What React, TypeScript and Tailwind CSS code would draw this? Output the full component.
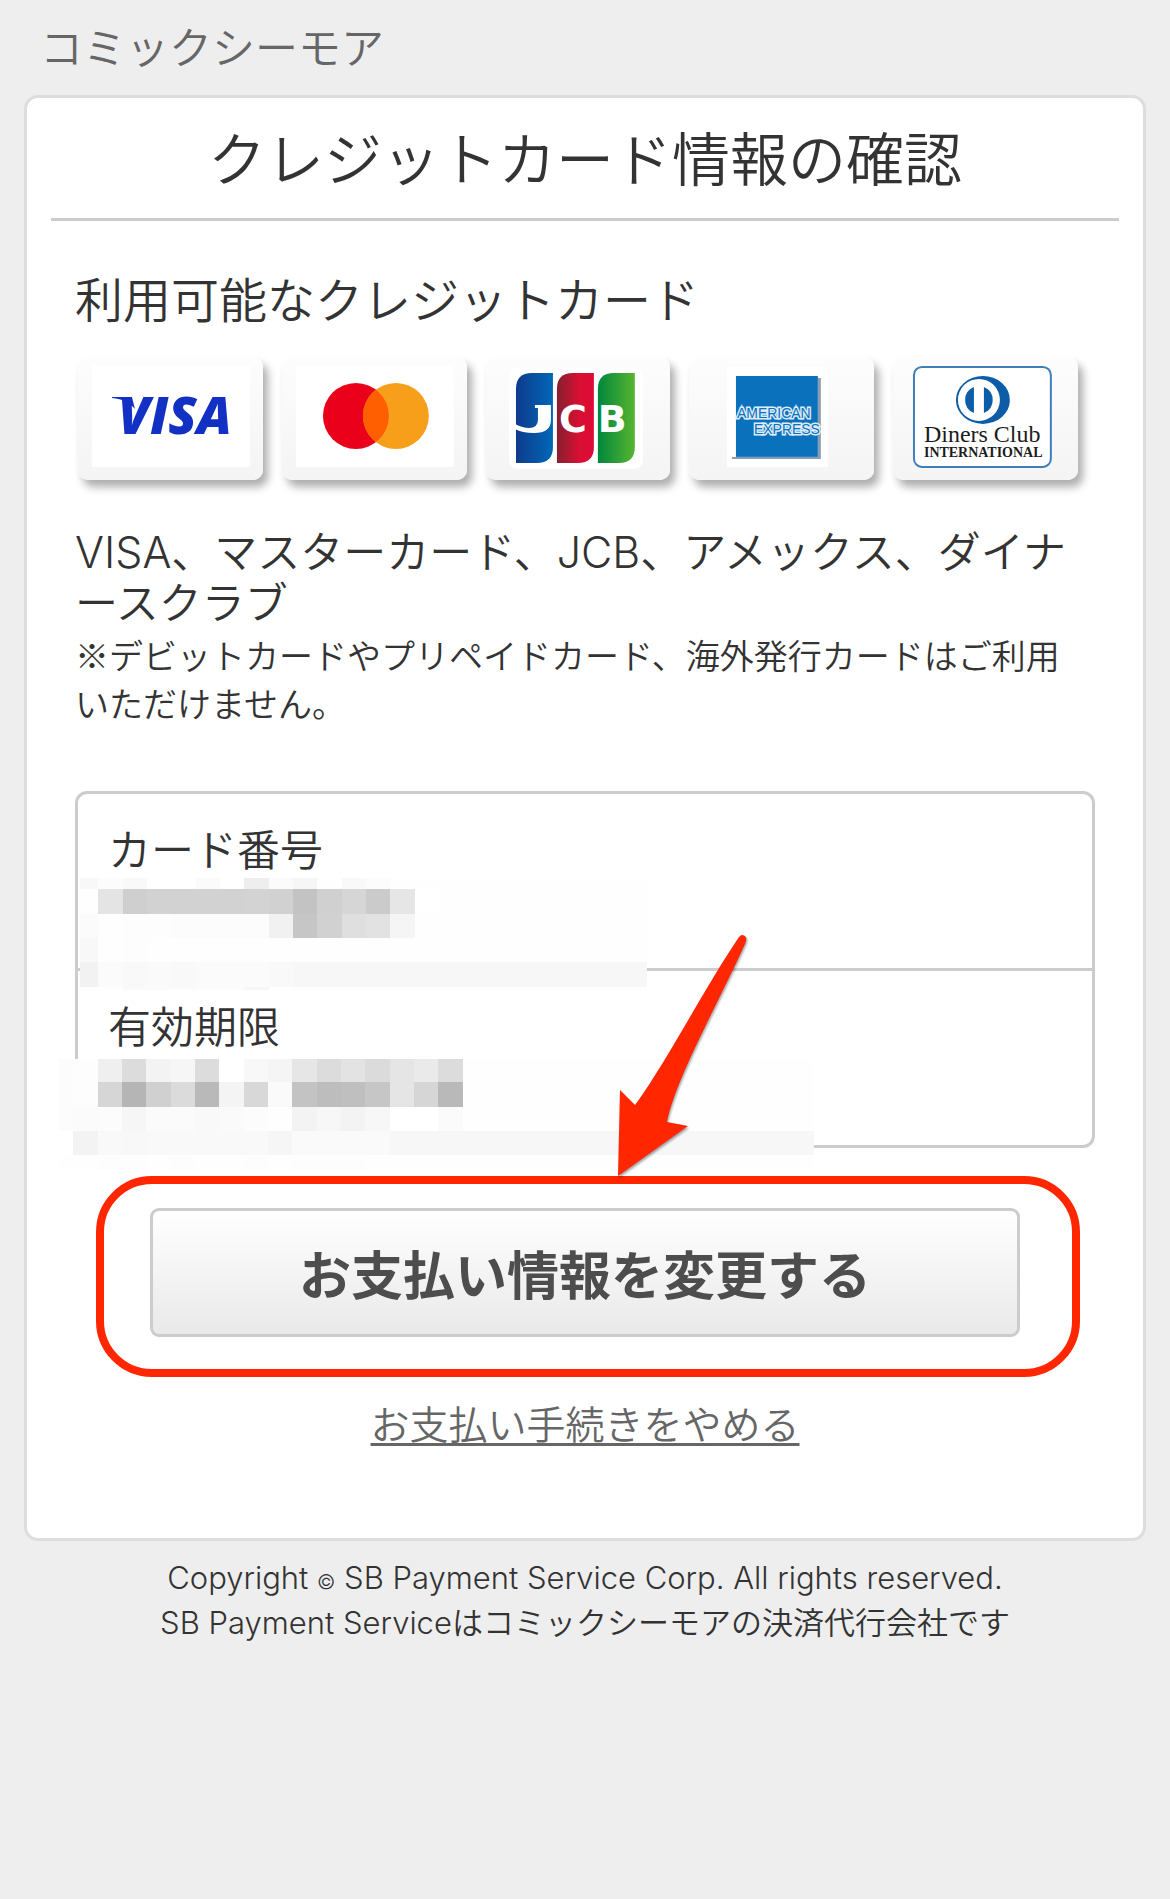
import type { ReactNode } from "react";

const CELL = 24.33;

const CARD_NUMBER_MASK = [
  "f8 fc f9 ff ff fb ff ee fb f6 fe f9 fc",
  "fe e4 cf d2 d2 d2 d2 d3 d1 c3 d0 d6 cb e6 ff fe",
  "fb fe fd fd fc fc fc fc f1 c6 d1 df e2 f5",
  "f8 fe fd fe fe fe fe fe fe fe fe fe fe fe",
  "f2 fb f9 fa f9 fb fb fb f9 f7 f7 f7 f7 f7 f7 f7 f7 f7 f7 f7 f7 f7 f7 f7",
  "fe fe fa fb fb fc fc f6 fe fe",
];

const EXPIRY_MASK = [
  "fc fd ef dc f3 f6 dc ff f8 f5 e6 dc e3 db e5 ea dc",
  "fc fd d6 b5 d0 db b9 f4 d8 fa c3 bd bf c6 e5 d6 b9 fe",
  "fc fb fc f6 fb fb f9 fa fc fe f3 f7 f3 f7 ff ff fb",
  "ff f3 f9 f8 f9 f9 f9 f9 f9 f6 fa fa fa fa f7 f7 f7 f7 f7 f7 f7 f7 f7 f7 f7 f7 f7 f7 f7 f7 f7 f7",
  "fe fe fd fd fe fd fe fe fd fe fd fd fd fe fe fe",
];

const Mosaic = ({
  rows,
  viewBox,
  className,
}: {
  rows: string[];
  viewBox: string;
  className: string;
}) => (
  <svg
    viewBox={viewBox}
    className={`pointer-events-none absolute ${className}`}
    shapeRendering="crispEdges"
    aria-hidden="true"
  >
    <rect width="800" height="200" fill="#fefefe" />
    {rows.map((row, y) =>
      row
        .split(" ")
        .map((shade, x) => (
          <rect
            key={`${x}-${y}`}
            x={x * CELL}
            y={y * CELL}
            width={CELL}
            height={CELL}
            fill={`#${shade}${shade}${shade}`}
          />
        ))
    )}
  </svg>
);

const CardBrand = ({ name, children }: { name: string; children: ReactNode }) => (
  <li className="rounded-[10px] bg-gradient-to-b from-[#fdfdfd] to-[#f4f4f4] shadow-[5px_7px_9px_rgba(0,0,0,0.32)]">
    <svg viewBox="0 0 185 123" className="block w-full" role="img" aria-label={name}>
      {children}
    </svg>
  </li>
);

const Visa = () => (
  <CardBrand name="VISA">
    <rect x="14" y="8" width="158" height="102" fill="#fff" />
    <path d="M34 40h20l3 12c-5-6-12-10-23-11z" fill="#1330c4" />
    <text
      x="40"
      y="77"
      fill="#1330c4"
      fontFamily="Open Sans"
      fontSize="52"
      fontWeight="800"
      fontStyle="italic"
    >
      VISA
    </text>
  </CardBrand>
);

const Mastercard = () => (
  <CardBrand name="Mastercard">
    <rect x="14" y="8" width="158" height="102" fill="#fff" />
    <circle cx="74" cy="59" r="33" fill="#eb001b" />
    <circle cx="114" cy="59" r="33" fill="#f79e1b" />
    <path d="M94 32.800a33 33 0 0 1 0 52.400a33 33 0 0 1 0-52.400z" fill="#ff5f00" />
  </CardBrand>
);

const Jcb = () => (
  <CardBrand name="JCB">
    <defs>
      <linearGradient id="jcb-blue">
        <stop offset="0" stopColor="#0f3a8c" />
        <stop offset="1" stopColor="#0068b7" />
      </linearGradient>
      <linearGradient id="jcb-red">
        <stop offset="0" stopColor="#86202f" />
        <stop offset="0.6" stopColor="#d80f33" />
        <stop offset="1" stopColor="#dc0b37" />
      </linearGradient>
      <linearGradient id="jcb-green">
        <stop offset="0" stopColor="#00873c" />
        <stop offset="1" stopColor="#57b531" />
      </linearGradient>
    </defs>
    <rect x="23" y="11" width="134" height="101" rx="8" fill="#fff" />
    <path d="M30 106V32q0-16 16-16h21v74q0 16-16 16z" fill="url(#jcb-blue)" />
    <path d="M71 106V32q0-16 16-16h21v74q0 16-16 16z" fill="url(#jcb-red)" />
    <path d="M112 106V32q0-16 16-16h21v74q0 16-16 16z" fill="url(#jcb-green)" />
    <path d="M49 48h16v15q0 13-17 13q-12 0-19-4v-5q8 4 14 4q9 0 9-8V51h-3z" fill="#fff" />
    <g fill="#fff" fontFamily="DejaVu Sans" fontSize="38" fontWeight="700">
      <text x="73" y="75">
        C
      </text>
      <text x="112" y="75">
        B
      </text>
    </g>
  </CardBrand>
);

const Amex = () => (
  <CardBrand name="American Express">
    <rect x="38" y="10" width="101" height="100" fill="#fff" />
    <path d="M43 102h89V21h-3v79H43z" fill="#8a9db0" />
    <rect x="47" y="19" width="82" height="81" fill="#0a71bd" />
    <g
      fill="#0a71bd"
      stroke="#dcebf7"
      strokeWidth="3"
      paintOrder="stroke"
      fontFamily="Liberation Sans"
      fontSize="14"
    >
      <text x="48" y="61">
        AMERICAN
      </text>
      <text x="65" y="77">
        EXPRESS
      </text>
    </g>
  </CardBrand>
);

const Diners = () => (
  <CardBrand name="Diners Club International">
    <rect
      x="21"
      y="10"
      width="137"
      height="100"
      rx="8"
      fill="#fff"
      stroke="#3f7fb8"
      strokeWidth="2"
    />
    <ellipse cx="90" cy="43" rx="27" ry="24" fill="#0d5ca8" />
    <circle cx="86" cy="43" r="21" fill="#fff" />
    <path d="M81 30v26a14 14 0 0 1 0-26zM91 30v26a14 14 0 0 0 0-26z" fill="#0d5ca8" />
    <text x="31" y="85" fill="#1c1c1c" fontFamily="Liberation Serif" fontSize="24">
      Diners Club
    </text>
    <text
      x="31"
      y="100"
      fill="#1c1c1c"
      fontFamily="Liberation Serif"
      fontSize="14"
      fontWeight="700"
    >
      INTERNATIONAL
    </text>
  </CardBrand>
);

const Highlight = () => (
  <>
    <div className="pointer-events-none absolute -top-8 -right-[60px] -bottom-10 -left-[54px] rounded-[56px] border-8 border-[#ff2600]" />
    <svg
      viewBox="0 0 130 243"
      className="pointer-events-none absolute -top-[274px] left-[468px] w-[130px] drop-shadow-[1px_2px_1px_rgba(0,0,0,0.35)]"
      aria-hidden="true"
    >
      <path
        d="M0 242L2 156L17 171C48 129 87 53 121 3Q124 -1 128 3Q129 6 127 10C97 76 58 144 49 188L70 192Z"
        fill="#ff2600"
      />
    </svg>
  </>
);

export default function App() {
  return (
    <div
      lang="ja"
      className="min-h-screen bg-[#eee] font-['Inter','Noto_Sans_CJK_JP',sans-serif] font-[350] text-[#333]"
    >
      <header className="px-10 pt-4 pb-[15px] text-[43px] leading-[64px] text-[#666]">
        コミックシーモア
      </header>

      <main className="mx-6 rounded-[14px] border-3 border-[#ddd] bg-white pb-[89px]">
        <h1 className="mx-6 border-b-3 border-[#ccc] pt-6 pb-5 text-center text-[58px] leading-[76px]">
          クレジットカード情報の確認
        </h1>

        <div className="px-12">
          <h2 className="mt-12 text-[48px] leading-[64px]">利用可能なクレジットカード</h2>
          <ul className="mt-6 grid grid-cols-5 gap-[19px] pr-[17px] pl-[3px]">
            <Visa />
            <Mastercard />
            <Jcb />
            <Amex />
            <Diners />
          </ul>
          <p className="mt-[47px] text-[43px] leading-[51px] break-all [line-break:anywhere]">
            VISA、マスターカード、JCB、アメックス、ダイナースクラブ
          </p>
          <p className="mt-0.5 pr-1 font-['Noto_Sans_CJK_JP',sans-serif] text-[34px] leading-[48px]">
            ※デビットカードやプリペイドカード、海外発行カードはご利用いただけません。
          </p>

          <dl className="mt-16 rounded-[12px] border-3 border-[#ccc]">
            <div className="relative min-h-[177px] border-b-3 border-[#ccc] px-[30px] pt-8">
              <dt className="text-[43px] leading-[48px]">カード番号</dt>
              <dd>
                <Mosaic
                  rows={CARD_NUMBER_MASK}
                  viewBox="6 13 567 112"
                  className="top-[84px] left-0.5 w-[567px]"
                />
              </dd>
            </div>
            <div className="relative min-h-[174px] px-[30px] pt-8">
              <dt className="text-[43px] leading-[48px]">有効期限</dt>
              <dd>
                <Mosaic
                  rows={EXPIRY_MASK}
                  viewBox="9 1 756 111"
                  className="top-[88px] -left-5 w-[756px]"
                />
              </dd>
            </div>
          </dl>

          <div className="relative mx-[75px] mt-[60px]">
            <button
              type="button"
              className="block w-full rounded-[9px] border-3 border-[#ccc] bg-gradient-to-b from-white to-[#e9e9e9] pt-[34px] pb-[25px] text-[52px] leading-[64px] font-bold text-[#4d4d4d]"
            >
              お支払い情報を変更する
            </button>
            <Highlight />
          </div>

          <p className="mt-16 text-center text-[39px] leading-[48px] text-[#666]">
            <a href="#" className="underline decoration-3 underline-offset-4">
              お支払い手続きをやめる
            </a>
          </p>
        </div>
      </main>

      <footer className="pt-[14px] text-center text-[31px] leading-[45px]">
        <p>
          Copyright <span className="text-[20px] leading-none">©</span> SB Payment Service Corp. All
          rights reserved.
        </p>
        <p>SB Payment Serviceはコミックシーモアの決済代行会社です</p>
      </footer>
    </div>
  );
}
